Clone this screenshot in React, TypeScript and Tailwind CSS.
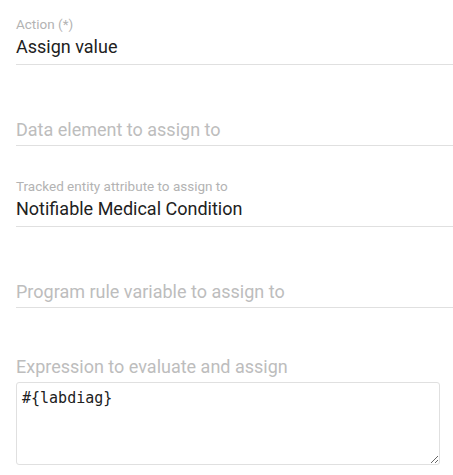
const font = { fontFamily: "Roboto, 'Noto Sans', sans-serif" };

const FilledField = ({ label, value }: { label: string; value: string }) => (
  <div className="h-[81px] pt-[16px]">
    <div className="border-b border-[#e0e0e0] pb-[5px]">
      <div className="text-[13.5px] leading-[17px] text-[#b3b3b3]">{label}</div>
      <div className="mt-[2px] text-[18px] leading-6 text-[#212121]">{value}</div>
    </div>
  </div>
);

const EmptyField = ({ label }: { label: string }) => (
  <div className="h-[81px] pt-[37px]">
    <div className="border-b border-[#e0e0e0] pb-[3px]">
      <div className="text-[18px] leading-6 text-[#bdbdbd]">{label}</div>
    </div>
  </div>
);

const App = () => {
  return (
    <div className="min-h-screen bg-white pl-4" style={font}>
      <FilledField label="Action (*)" value="Assign value" />
      <EmptyField label="Data element to assign to" />
      <FilledField
        label="Tracked entity attribute to assign to"
        value="Notifiable Medical Condition"
      />
      <EmptyField label="Program rule variable to assign to" />

      {/* Expression */}
      <div className="pt-[31px]">
        <div className="text-[18px] leading-6 text-[#bdbdbd]">
          Expression to evaluate and assign
        </div>
        <textarea
          className="mt-[3px] block h-[83px] w-[424px] resize rounded-[3px] border border-[#e0e0e0] px-[5px] pt-[7px] text-[15px] leading-[17px] text-[#212121] outline-none"
          style={{ fontFamily: "'DejaVu Sans Mono', monospace" }}
          defaultValue="#{labdiag}"
        />
      </div>
    </div>
  );
};

export default App;
